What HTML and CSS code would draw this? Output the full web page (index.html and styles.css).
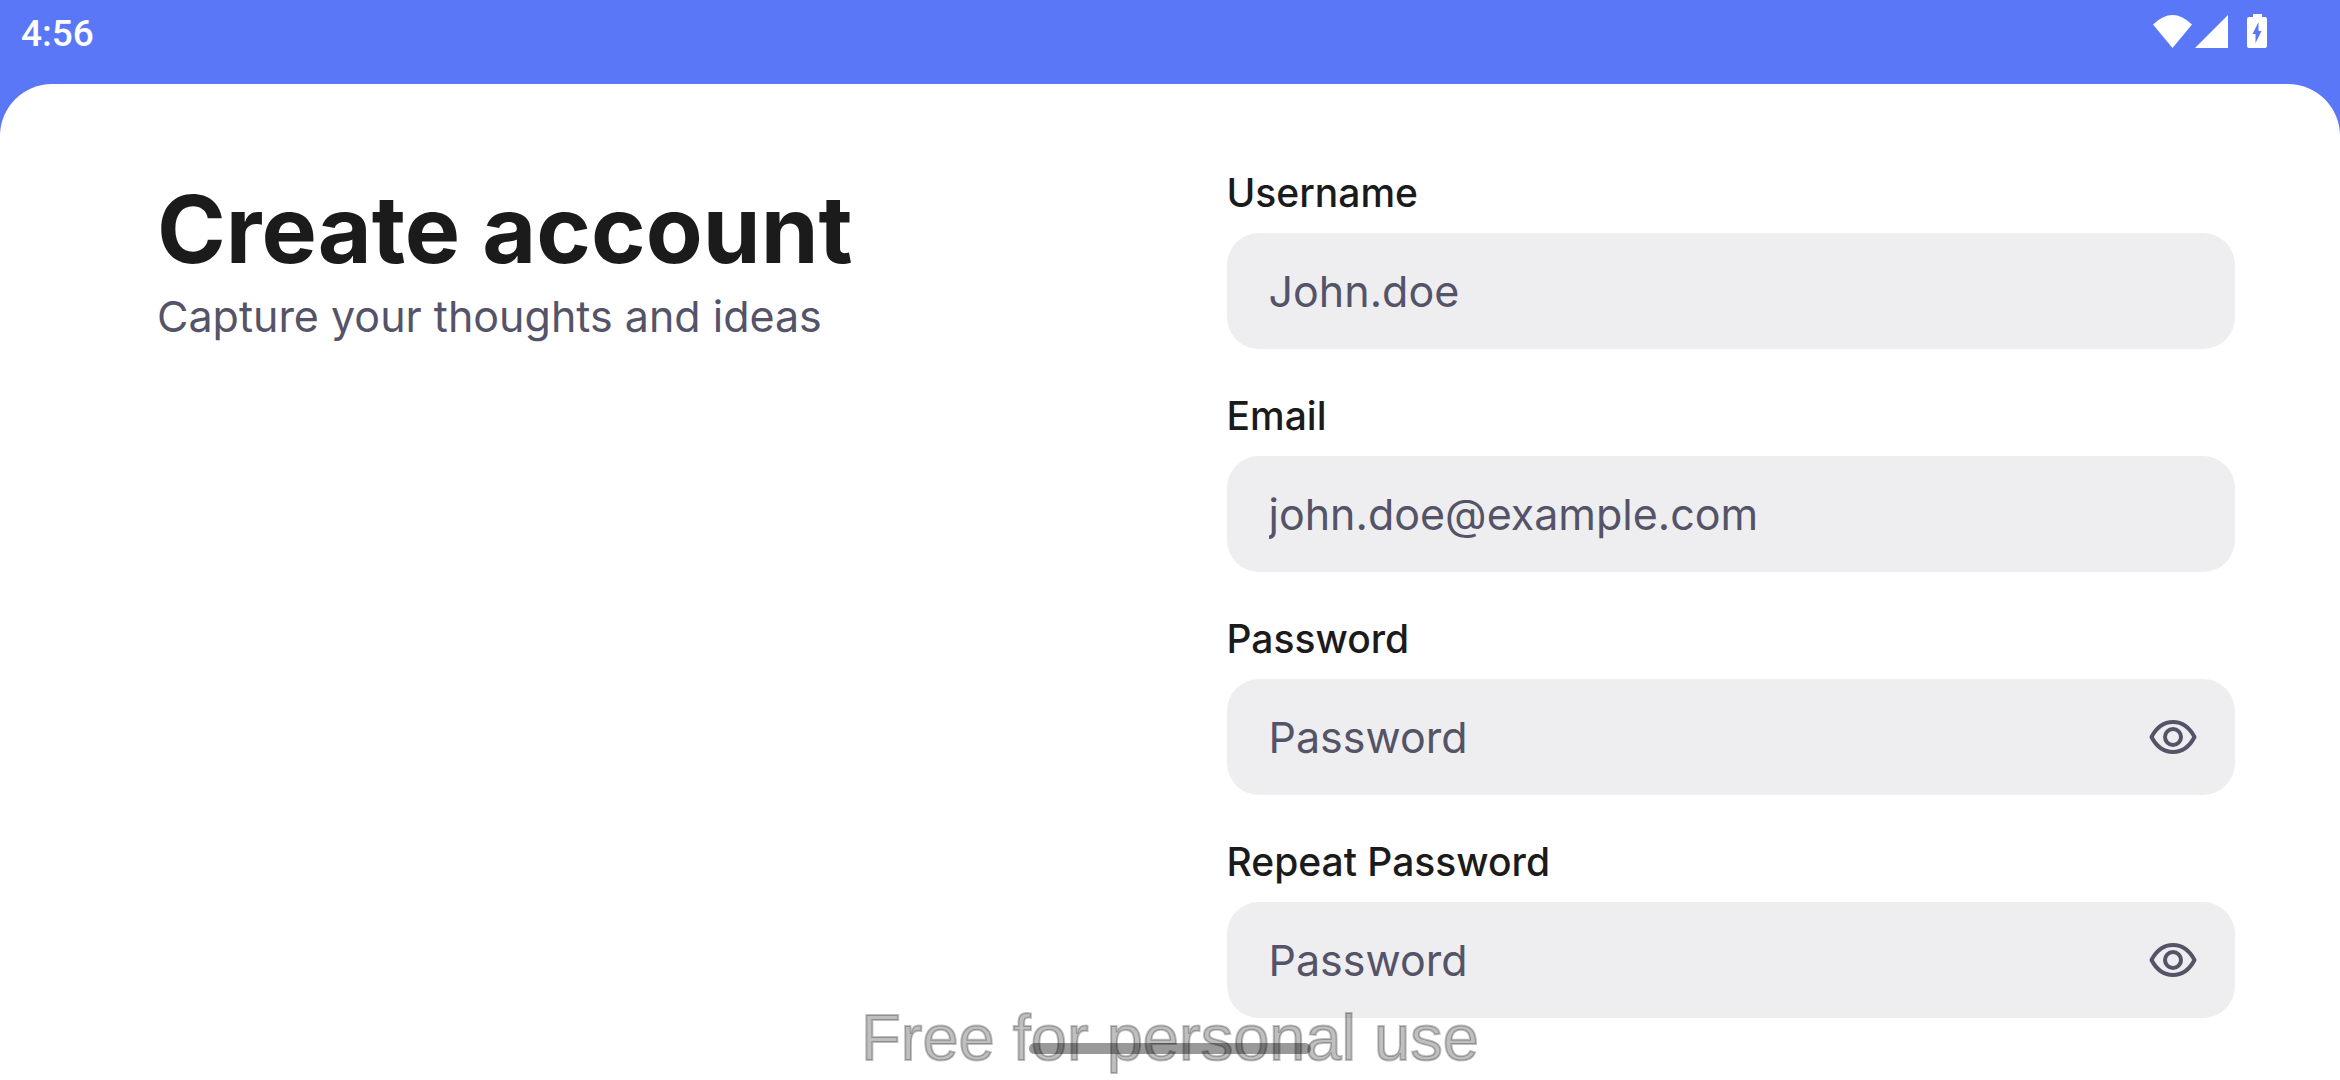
FILE: index.html
```html
<!DOCTYPE html>
<html lang="en">
<head>
<meta charset="utf-8">
<meta name="viewport" content="width=device-width, initial-scale=1">
<title>Create account</title>
<link rel="stylesheet" href="styles.css">
</head>
<body>
<header class="status-bar">
  <time class="clock">4:56</time>
  <svg class="status-icons" viewBox="0 0 116 36" aria-hidden="true">
    <path d="M0 10.500Q19.500 -8.500 39 10.500L19.500 34Z"/>
    <path d="M42 34L75 1V34Z"/>
    <path fill-rule="evenodd" d="M100 0h9v3h3q2 0 2 2v27q0 2-2 2h-16q-2 0-2-2V5q0-2 2-2h4zM105.500 8L99.500 20h3v9l6-12h-3z"/>
  </svg>
</header>
<main class="sheet">
  <section class="intro">
    <h1 class="title">Create account</h1>
    <p class="subtitle">Capture your thoughts and ideas</p>
  </section>
  <form class="form">
    <div class="field">
      <label class="label" for="username">Username</label>
      <div class="box"><input class="input" id="username" type="text" placeholder="John.doe"></div>
    </div>
    <div class="field">
      <label class="label" for="email">Email</label>
      <div class="box"><input class="input" id="email" type="email" placeholder="john.doe@example.com"></div>
    </div>
    <div class="field">
      <label class="label" for="password">Password</label>
      <div class="box">
        <input class="input" id="password" type="password" placeholder="Password">
        <button class="reveal" type="button" aria-label="Show password"><svg class="eye" viewBox="0 0 48 34"><path d="M2.500 17C13 -3 35 -3 45.500 17C35 37 13 37 2.500 17Z"/><circle cx="24" cy="17" r="8"/></svg></button>
      </div>
    </div>
    <div class="field">
      <label class="label" for="repeat">Repeat Password</label>
      <div class="box">
        <input class="input" id="repeat" type="password" placeholder="Password">
        <button class="reveal" type="button" aria-label="Show repeated password"><svg class="eye" viewBox="0 0 48 34"><path d="M2.500 17C13 -3 35 -3 45.500 17C35 37 13 37 2.500 17Z"/><circle cx="24" cy="17" r="8"/></svg></button>
      </div>
    </div>
  </form>
</main>
<div class="home-bar"></div>
<div class="watermark">Free for personal use</div>
</body>
</html>
```
FILE: styles.css
```css
* { box-sizing: border-box; }

body {
  margin: 0;
  min-height: 100vh;
  display: flex;
  flex-direction: column;
  background: #5977f7;
  color: #1b1b1c;
  font-family: Inter, "Liberation Sans", sans-serif;
}

.status-bar {
  display: flex;
  justify-content: space-between;
  align-items: flex-start;
  height: 84px;
  padding: 14px 71px 0 21px;
  color: #fff;
}

.clock {
  font: 500 37px/40px Roboto, sans-serif;
}

.status-icons {
  width: 116px;
  height: 36px;
  fill: #fff;
}

.sheet {
  flex: 1;
  display: grid;
  grid-template-columns: 1fr 1fr;
  gap: 61px;
  padding: 84px 105px 62px 157px;
  border-radius: 52px 52px 0 0;
  background: #fff;
}

.title {
  margin: 0;
  font-size: 93px;
  line-height: 122px;
  font-weight: 700;
}

.subtitle {
  margin: 0;
  font-size: 43px;
  line-height: 52px;
  color: #555367;
}

.form {
  display: flex;
  flex-direction: column;
  gap: 42px;
}

.field {
  display: flex;
  flex-direction: column;
  gap: 16px;
}

.label {
  font-size: 39px;
  line-height: 49px;
  font-weight: 500;
}

.box {
  display: flex;
  align-items: center;
  height: 116px;
  padding: 0 31px 0 42px;
  border-radius: 32px;
  background: #eeeef0;
}

.input {
  flex: 1;
  min-width: 0;
  padding: 0;
  border: 0;
  outline: 0;
  background: none;
  color: #1b1b1c;
  font: 400 43px/60px Inter, "Liberation Sans", sans-serif;
}

.input::placeholder {
  color: #555367;
  opacity: 1;
}

.reveal {
  display: flex;
  padding: 7px;
  border: 0;
  background: none;
}

.eye {
  width: 48px;
  height: 34px;
  fill: none;
  stroke: #555367;
  stroke-width: 4;
  stroke-linejoin: round;
}

.home-bar {
  position: fixed;
  left: 50%;
  bottom: 26px;
  width: 282px;
  height: 11px;
  margin-left: -141px;
  border-radius: 6px;
  background: rgba(0, 0, 0, 0.4);
}

.watermark {
  position: fixed;
  left: 0;
  right: 0;
  bottom: 0;
  text-align: center;
  white-space: nowrap;
  pointer-events: none;
  font: 400 65px/84px "Liberation Sans", Arial, sans-serif;
  color: rgba(0, 0, 0, 0.25);
  -webkit-text-stroke: 2px rgba(0, 0, 0, 0.25);
}
```
